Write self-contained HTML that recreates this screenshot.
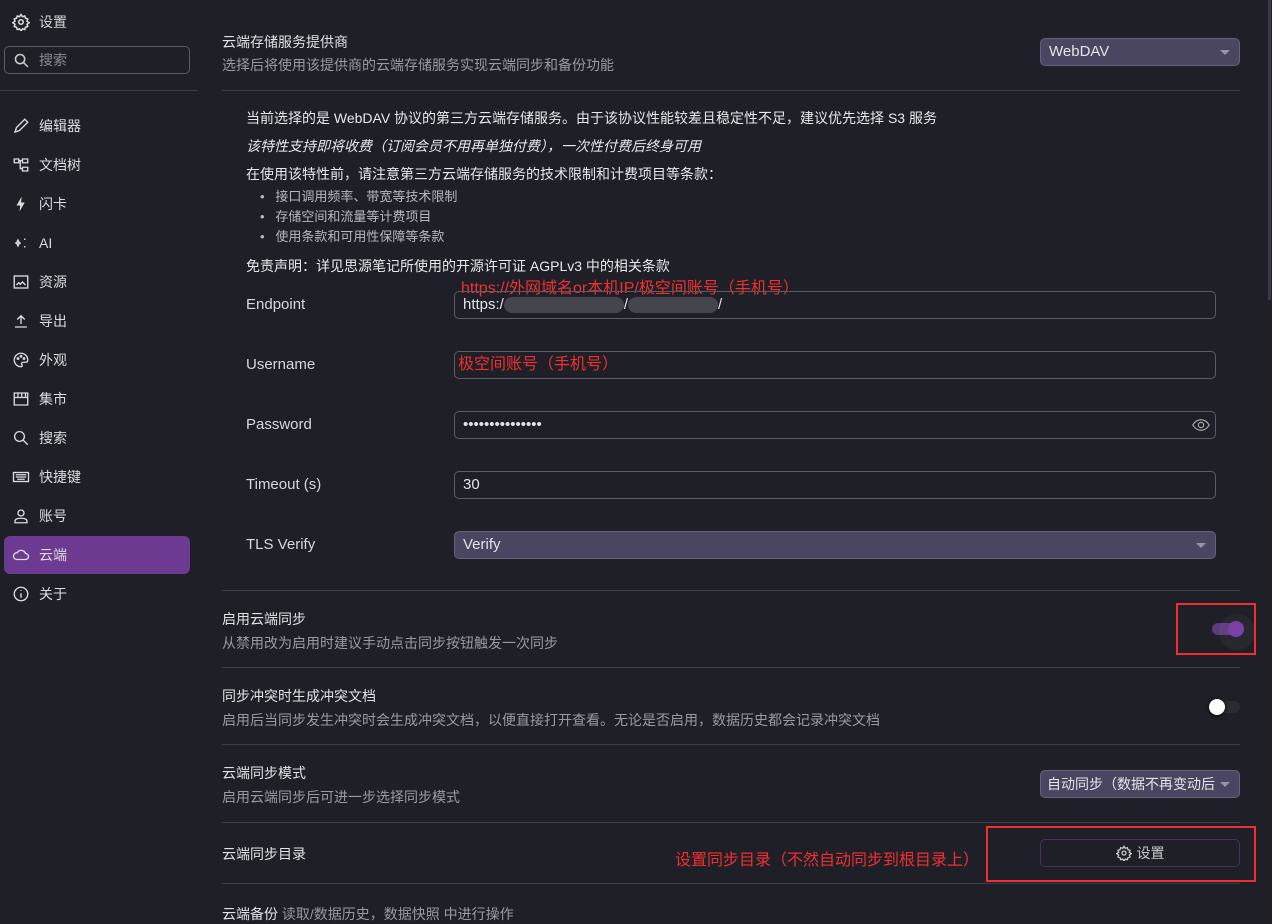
<!DOCTYPE html>
<html><head><meta charset="utf-8"><style>
*{box-sizing:border-box;margin:0;padding:0}
body{width:1272px;height:920px;background:#1e1f27;color:#d4d4d8;font-family:"Liberation Sans","Noto Sans CJK SC",sans-serif;font-size:14px;position:relative;overflow:hidden}
.a{position:absolute;white-space:nowrap}
.nav{position:absolute;left:4px;width:186px;height:38px;display:flex;align-items:center;padding-left:8px;font-size:14px;color:#dcdce0}
.nav svg{width:18px;height:18px;margin-right:9px;stroke:#dcdce0;fill:none;stroke-width:1.8}
.title{font-size:14px;color:#e2e2e6}
.desc{font-size:14px;color:#9a9aa3}
.line{position:absolute;left:222px;width:1018px;height:1px;background:#3d3d47}
.inp{position:absolute;left:454px;width:762px;height:28px;border:1px solid #5c5c66;border-radius:5px;padding-left:8px;line-height:26px;font-size:15px;color:#e4e4e8}
.sel{background:#4a4560;border-color:#666078}
.tri{position:absolute;right:9px;top:11px;border-left:5px solid transparent;border-right:5px solid transparent;border-top:5px solid #9893a6}
.lab{position:absolute;left:246px;font-size:15px;color:#d8d8dc}
.red{color:#f03030}
.box{position:absolute;border:2px solid #f03030}
</style></head><body>
<div class="a" style="left:12px;top:12px;font-size:14px;display:flex;align-items:center"><svg width="18" height="18" viewBox="0 0 24 24" fill="none" stroke="#ddd" stroke-width="2"><circle cx="12" cy="12" r="3"/><path d="M12 2l2 3 3-1 1 3 3 1-1 3 3 2-3 2 1 3-3 1-1 3-3-1-2 3-2-3-3 1-1-3-3-1 1-3-3-2 3-2-1-3 3-1 1-3 3 1z"/></svg><span style="margin-left:9px">设置</span></div>
<div class="a" style="left:4px;top:46px;width:186px;height:28px;border:1px solid #5c5c66;border-radius:5px;display:flex;align-items:center;padding-left:8px;color:#8a8a92;font-size:14px"><svg width="17" height="17" viewBox="0 0 24 24" fill="none" stroke="#ccc" stroke-width="2.2"><circle cx="10" cy="10" r="6.5"/><path d="M15 15l6 6"/></svg><span style="margin-left:9px">搜索</span></div>
<div class="a" style="left:0;top:90px;width:198px;height:1px;background:#3d3d47"></div>
<div class="nav" style="top:107px"><svg viewBox="0 0 24 24"><path d="M4 20l2-6L17 3l4 4L10 18z"/></svg>编辑器</div>
<div class="nav" style="top:146px"><svg viewBox="0 0 24 24"><path d="M3 4h6v5H3zM14 4h7v5h-7zM14 15h7v5h-7zM9 6h5M11 6v11h3"/></svg>文档树</div>
<div class="nav" style="top:185px"><svg viewBox="0 0 24 24" style="fill:#ddd;stroke:none"><path d="M13 2L6 14h5l-1 8 7-12h-5z"/></svg>闪卡</div>
<div class="nav" style="top:224px"><svg viewBox="0 0 24 24"><path d="M8 8l2 4-2 4-2-4zM4 12h8M17 6v2M17 16v2"/></svg>AI</div>
<div class="nav" style="top:263px"><svg viewBox="0 0 24 24"><rect x="3" y="4" width="18" height="16"/><path d="M6 16l3-3 2 2 3-3 4 4"/></svg>资源</div>
<div class="nav" style="top:302px"><svg viewBox="0 0 24 24"><path d="M12 16V5M7 10l5-5 5 5M4 20h16"/></svg>导出</div>
<div class="nav" style="top:341px"><svg viewBox="0 0 24 24"><path d="M12 3a9 9 0 100 18c2 0 2-2 1-3s0-3 2-3h3c2 0 3-1 3-3 0-5-4-9-9-9z"/><circle cx="8" cy="10" r="1"/><circle cx="12" cy="7" r="1"/><circle cx="16" cy="10" r="1"/></svg>外观</div>
<div class="nav" style="top:380px"><svg viewBox="0 0 24 24"><path d="M3 4h18v16H3zM3 10h18M8 4v6M13 4v6M18 4v6"/></svg>集市</div>
<div class="nav" style="top:419px"><svg viewBox="0 0 24 24"><circle cx="10" cy="10" r="6.5"/><path d="M15 15l6 6"/></svg>搜索</div>
<div class="nav" style="top:458px"><svg viewBox="0 0 24 24"><rect x="2" y="6" width="20" height="12"/><path d="M5 9h14M5 12h14M7 15h10"/></svg>快捷键</div>
<div class="nav" style="top:497px"><svg viewBox="0 0 24 24"><circle cx="12" cy="8" r="4"/><path d="M4 21v-2c0-3 4-4 8-4s8 1 8 4v2z"/></svg>账号</div>
<div class="nav" style="top:536px;background:#6c3a91;border-radius:6px"><svg viewBox="0 0 24 24"><path d="M6 18h12a4 4 0 000-8 6 6 0 00-11-1 4.5 4.5 0 00-1 9z"/></svg>云端</div>
<div class="nav" style="top:575px"><svg viewBox="0 0 24 24"><circle cx="12" cy="12" r="9"/><path d="M12 11v6M12 7v1"/></svg>关于</div>
<div class="a" style="left:1268px;top:0;width:3px;height:300px;background:#3a3a44"></div>

<div class="a title" style="left:222px;top:32px">云端存储服务提供商</div>
<div class="a desc" style="left:222px;top:55px">选择后将使用该提供商的云端存储服务实现云端同步和备份功能</div>
<div class="inp sel" style="left:1040px;top:38px;width:200px;height:28px">WebDAV<div class="tri"></div></div>
<div class="line" style="top:90px"></div>

<div class="a" style="left:246px;top:108px;color:#e8e8ec">当前选择的是 WebDAV 协议的第三方云端存储服务。由于该协议性能较差且稳定性不足，建议优先选择 S3 服务</div>
<div class="a" style="left:246px;top:136px;font-style:italic;color:#e8e8ec">该特性支持即将收费（订阅会员不用再单独付费），一次性付费后终身可用</div>
<div class="a" style="left:246px;top:164px;color:#e8e8ec">在使用该特性前，请注意第三方云端存储服务的技术限制和计费项目等条款：</div>
<div class="a desc" style="left:260px;top:187px;line-height:20px;font-size:13px;color:#b8b8bf">•&nbsp;&nbsp;&nbsp;接口调用频率、带宽等技术限制<br>•&nbsp;&nbsp;&nbsp;存储空间和流量等计费项目<br>•&nbsp;&nbsp;&nbsp;使用条款和可用性保障等条款</div>
<div class="a" style="left:246px;top:256px;color:#e8e8ec">免责声明：详见思源笔记所使用的开源许可证 AGPLv3 中的相关条款</div>

<div class="a red" style="left:461px;top:274px;font-size:16px">https://外网域名or本机IP/极空间账号（手机号）</div>
<div class="lab" style="top:296px">Endpoint</div>
<div class="inp" style="top:291px">https:/<span style="display:inline-block;width:120px;height:16px;background:#44454d;border-radius:8px;vertical-align:middle"></span>/<span style="display:inline-block;width:90px;height:16px;background:#44454d;border-radius:8px;vertical-align:middle"></span>/</div>
<div class="lab" style="top:356px">Username</div>
<div class="inp" style="top:351px;padding-left:3px"><span class="red" style="font-size:16px">极空间账号（手机号）</span></div>
<div class="lab" style="top:416px">Password</div>
<div class="inp" style="top:411px;letter-spacing:0">•••••••••••••••<svg style="position:absolute;right:5px;top:6px" width="18" height="14" viewBox="0 0 24 16" fill="none" stroke="#aaa" stroke-width="1.6"><path d="M1 8c3-5 7-7 11-7s8 2 11 7c-3 5-7 7-11 7S4 13 1 8z"/><circle cx="12" cy="8" r="3.5"/></svg></div>
<div class="lab" style="top:476px">Timeout (s)</div>
<div class="inp" style="top:471px">30</div>
<div class="lab" style="top:536px">TLS Verify</div>
<div class="inp sel" style="top:531px">Verify<div class="tri"></div></div>
<div class="line" style="top:590px"></div>

<div class="a title" style="left:222px;top:609px">启用云端同步</div>
<div class="a desc" style="left:222px;top:633px">从禁用改为启用时建议手动点击同步按钮触发一次同步</div>
<div class="a" style="left:1212px;top:623px;width:28px;height:12px;border-radius:6px;background:#5c3a7e"></div>
<div class="a" style="left:1219px;top:614px;width:36px;height:36px;border-radius:18px;background:rgba(255,255,255,0.04)"></div>
<div class="a" style="left:1228px;top:621px;width:16px;height:16px;border-radius:8px;background:#7c3fa6"></div>
<div class="box" style="left:1176px;top:603px;width:80px;height:52px"></div>
<div class="line" style="top:667px"></div>

<div class="a title" style="left:222px;top:686px">同步冲突时生成冲突文档</div>
<div class="a desc" style="left:222px;top:710px">启用后当同步发生冲突时会生成冲突文档，以便直接打开查看。无论是否启用，数据历史都会记录冲突文档</div>
<div class="a" style="left:1212px;top:701px;width:28px;height:12px;border-radius:6px;background:#2a2b33"></div>
<div class="a" style="left:1209px;top:699px;width:16px;height:16px;border-radius:8px;background:#fff;box-shadow:0 1px 3px #000"></div>
<div class="line" style="top:744px"></div>

<div class="a title" style="left:222px;top:763px">云端同步模式</div>
<div class="a desc" style="left:222px;top:787px">启用云端同步后可进一步选择同步模式</div>
<div class="inp sel" style="left:1040px;top:770px;width:200px;height:28px;font-size:14px;overflow:hidden;padding-left:6px">自动同步（数据不再变动后<div class="tri"></div></div>
<div class="line" style="top:822px"></div>

<div class="a title" style="left:222px;top:844px">云端同步目录</div>
<div class="a red" style="left:675px;top:846px;font-size:16px">设置同步目录（不然自动同步到根目录上）</div>
<div class="a" style="left:1040px;top:839px;width:200px;height:28px;border:1px solid #4a2f60;border-radius:5px;display:flex;align-items:center;justify-content:center;color:#c8c8cc;font-size:14px"><svg width="16" height="16" viewBox="0 0 24 24" fill="none" stroke="#ccc" stroke-width="2"><circle cx="12" cy="12" r="3"/><path d="M12 2l2 3 3-1 1 3 3 1-1 3 3 2-3 2 1 3-3 1-1 3-3-1-2 3-2-3-3 1-1-3-3-1 1-3-3-2 3-2-1-3 3-1 1-3 3 1z"/></svg><span style="margin-left:5px">设置</span></div>
<div class="box" style="left:986px;top:826px;width:270px;height:56px"></div>
<div class="line" style="top:883px"></div>
<div class="a title" style="left:222px;top:904px">云端备份 <span class="desc">读取/数据历史，数据快照 中进行操作</span></div>
</body></html>
